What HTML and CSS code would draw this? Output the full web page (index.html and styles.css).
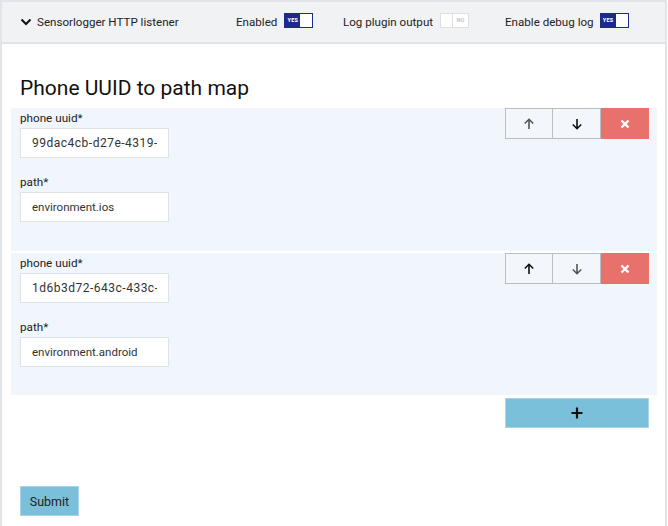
FILE: index.html
```html
<!DOCTYPE html>
<html>
<head>
<meta charset="utf-8">
<link rel="stylesheet" href="styles.css">
</head>
<body>
<div class="card">
  <div class="card-header">
    <div class="title-wrap">
      <svg class="chev" width="12" height="8" viewBox="0 0 12 8"><path d="M1.5 1.5 L6 6 L10.5 1.5" fill="none" stroke="#111" stroke-width="2"/></svg>
      <span>Sensorlogger HTTP listener</span>
    </div>
    <div class="opt opt-enabled"><span>Enabled</span><span class="tog on"><span class="lbl">YES</span><span class="knob"></span></span></div>
    <div class="opt opt-log"><span>Log plugin output</span><span class="tog off"><span class="knob"></span><span class="lbl">NO</span></span></div>
    <div class="opt opt-debug"><span>Enable debug log</span><span class="tog on"><span class="lbl">YES</span><span class="knob"></span></span></div>
  </div>
  <div class="card-body">
    <h2 class="legend">Phone UUID to path map</h2>
    <div class="item">
      <div class="fields">
        <div class="group">
          <label>phone uuid*</label>
          <input class="inp uuid" type="text" value="99dac4cb-d27e-4319-9a1b-0000">
        </div>
        <div class="group">
          <label>path*</label>
          <input class="inp" type="text" value="environment.ios">
        </div>
      </div>
      <div class="btns">
        <button class="b up dim"><svg width="12" height="12" viewBox="0 0 12 12"><path d="M6 11V1.5M1.8 5.5 6 1.3l4.2 4.2" fill="none" stroke="#555" stroke-width="1.6"/></svg></button>
        <button class="b down"><svg width="12" height="12" viewBox="0 0 12 12"><path d="M6 1v9.5M1.8 6.5 6 10.7l4.2-4.2" fill="none" stroke="#111" stroke-width="1.6"/></svg></button>
        <button class="b del"><svg width="10" height="10" viewBox="0 0 10 10"><path d="M1.5 1.5l7 7M8.5 1.5l-7 7" stroke="#fff" stroke-width="2.4"/></svg></button>
      </div>
    </div>
    <div class="item second">
      <div class="fields">
        <div class="group">
          <label>phone uuid*</label>
          <input class="inp uuid" type="text" value="1d6b3d72-643c-433c-8f0e-0000">
        </div>
        <div class="group">
          <label>path*</label>
          <input class="inp" type="text" value="environment.android">
        </div>
      </div>
      <div class="btns">
        <button class="b up"><svg width="12" height="12" viewBox="0 0 12 12"><path d="M6 11V1.5M1.8 5.5 6 1.3l4.2 4.2" fill="none" stroke="#111" stroke-width="1.6"/></svg></button>
        <button class="b down dim"><svg width="12" height="12" viewBox="0 0 12 12"><path d="M6 1v9.5M1.8 6.5 6 10.7l4.2-4.2" fill="none" stroke="#555" stroke-width="1.6"/></svg></button>
        <button class="b del"><svg width="10" height="10" viewBox="0 0 10 10"><path d="M1.5 1.5l7 7M8.5 1.5l-7 7" stroke="#fff" stroke-width="2.4"/></svg></button>
      </div>
    </div>
    <div class="add-row">
      <button class="add"><svg width="12" height="12" viewBox="0 0 12 12"><path d="M6 0.5v11M0.5 6h11" stroke="#111" stroke-width="2.2"/></svg></button>
    </div>
    <div class="submit-row">
      <button class="submit">Submit</button>
    </div>
  </div>
</div>
</body>
</html>
```

FILE: styles.css
```css
* { box-sizing: border-box; }
html, body { margin: 0; padding: 0; background: #fff; }
body {
  font-family: Roboto, Inter, "Liberation Sans", sans-serif;
  color: #222;
  width: 668px;
  height: 526px;
  overflow: hidden;
}
.card {
  width: 667px;
  min-height: 526px;
  border: 2px solid #e1e4e8;
  border-bottom: none;
  background: #fff;
}
.card-header {
  height: 42px;
  background: #f1f2f4;
  border-bottom: 2px solid #e1e4e8;
  display: flex;
  align-items: center;
  font-size: 11.6px;
  color: #222;
}
.title-wrap {
  display: flex;
  align-items: center;
  padding-left: 18px;
  width: 234px;
}
.chev { margin-right: 5px; }
.opt {
  display: flex;
  align-items: center;
}
.opt-enabled { width: 107px; }
.opt-log { width: 162px; }
.tog { margin-left: 7px; }
.opt-debug .tog { margin-left: 6px; }
.tog {
  display: inline-flex;
  width: 29px;
  height: 15px;
  border: 1.5px solid #1c2a8c;
  margin-top: -4px;
}
.tog.on { background: #1c2a8c; }
.tog .lbl {
  font-size: 5.5px;
  font-weight: 800;
  color: #fff;
  width: 15px;
  display: flex;
  align-items: center;
  justify-content: center;
  letter-spacing: 0.2px;
}
.tog .knob {
  flex: 1;
  background: #fff;
}
.tog.off {
  border-color: #dcdfe3;
  background: #fff;
}
.tog.off .knob {
  flex: none;
  width: 12px;
  background: #fff;
  border-right: 1px solid #dcdfe3;
}
.tog.off .lbl { color: #c4c8cc; flex: 1; }
.card-body {
  padding: 0 8px 0 9px;
}
.legend {
  margin: 0;
  padding: 30px 0 0 9px;
  height: 64px;
  font-size: 21px;
  font-weight: 400;
  color: #111;
  line-height: 28px;
}
.item {
  background: #f1f5fc;
  display: flex;
  justify-content: space-between;
  align-items: flex-start;
  padding: 0 8px 10px 9px;
  height: 143px;
}
.item.second { margin-top: 2px; height: 142px; }
.fields { padding-top: 2px; }
.group { margin-bottom: 16px; }
.group label {
  display: block;
  font-size: 11.7px;
  line-height: 16px;
  color: #222;
  margin-bottom: 2px;
}
.inp {
  display: block;
  width: 149px;
  height: 30px;
  border: 1px solid #dfe3e8;
  background: #fff;
  font-family: inherit;
  font-size: 11.5px;
  color: #333;
  padding: 0 11px;
  outline: none;
}
.inp.uuid { font-size: 12px; letter-spacing: 0.5px; }
.btns { display: flex; }
.b {
  width: 48px;
  height: 31px;
  border: 1px solid #b9bec4;
  background: #f3f6fa;
  display: flex;
  align-items: center;
  justify-content: center;
  padding: 0;
  margin: 0;
}
.b + .b { border-left: none; }
.b.del {
  background: #e8716c;
  border-color: #e8716c;
}
.add-row {
  display: flex;
  justify-content: flex-end;
  padding: 3px 8px 0 0;
}
.add {
  width: 144px;
  height: 30px;
  background: #7bc0db;
  border: 1px solid #a8d6e8;
  display: flex;
  align-items: center;
  justify-content: center;
  padding: 0;
}
.submit-row { padding: 58px 0 0 9px; }
.submit {
  width: 59px;
  height: 30px;
  background: #7bc0db;
  border: 1px solid #a8d6e8;
  font-family: inherit;
  font-size: 12.5px;
  color: #222;
  padding: 0;
}
```
